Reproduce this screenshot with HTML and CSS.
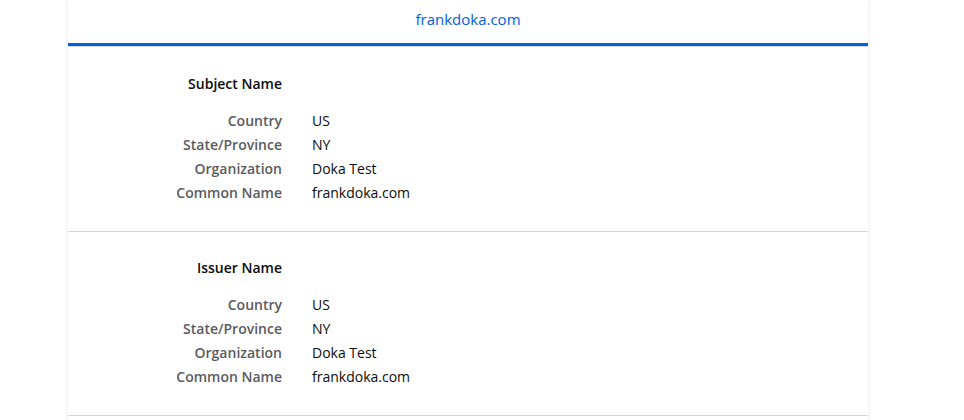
FILE: index.html
```html
<!DOCTYPE html>
<html>
<head>
<meta charset="utf-8">
<link rel="stylesheet" href="styles.css">
</head>
<body>
<div class="card">
  <div class="tabs">
    <span class="tab">frankdoka.com</span>
  </div>
  <section class="section">
    <h2 class="title">Subject Name</h2>
    <div class="rows">
      <div class="label">Country</div><div class="value">US</div>
      <div class="label">State/Province</div><div class="value">NY</div>
      <div class="label">Organization</div><div class="value">Doka Test</div>
      <div class="label">Common Name</div><div class="value">frankdoka.com</div>
    </div>
  </section>
  <section class="section">
    <h2 class="title">Issuer Name</h2>
    <div class="rows">
      <div class="label">Country</div><div class="value">US</div>
      <div class="label">State/Province</div><div class="value">NY</div>
      <div class="label">Organization</div><div class="value">Doka Test</div>
      <div class="label">Common Name</div><div class="value">frankdoka.com</div>
    </div>
  </section>
  <div class="rest"></div>
</div>
</body>
</html>
```
FILE: styles.css
```css
html, body {
  margin: 0;
  padding: 0;
  background: #ffffff;
}
body {
  font-family: "Open Sans", "Noto Sans", sans-serif;
  color: #0c0c0d;
  height: 420px;
  overflow: hidden;
}
.card {
  width: 800px;
  margin-left: 68px;
  background: #ffffff;
  box-shadow: 0 0 4px rgba(12, 12, 13, 0.1);
}
.tabs {
  height: 43px;
  display: flex;
  align-items: center;
  justify-content: center;
  border-bottom: 3px solid #0060df;
  box-shadow: 0 1px 0 #d7d7db;
}
.tab {
  font-size: 15px;
  color: #0060df;
  margin-top: -5px;
}
.section {
  padding: 24px 0 26px;
  border-bottom: 1px solid #d7d7db;
}
.section:first-of-type {
  margin-top: 2px;
}
.title {
  margin: 0;
  width: 214px;
  text-align: right;
  font-size: 14px;
  font-weight: 600;
  line-height: 24px;
  color: #0c0c0d;
}
.rows {
  margin-top: 13px;
  display: grid;
  grid-template-columns: 214px 1fr;
  column-gap: 30px;
  font-size: 14px;
  line-height: 24px;
}
.label {
  text-align: right;
  font-weight: 600;
  color: #5b5b5f;
}
.value {
  color: #0c0c0d;
}
.rest {
  height: 100px;
}
```
